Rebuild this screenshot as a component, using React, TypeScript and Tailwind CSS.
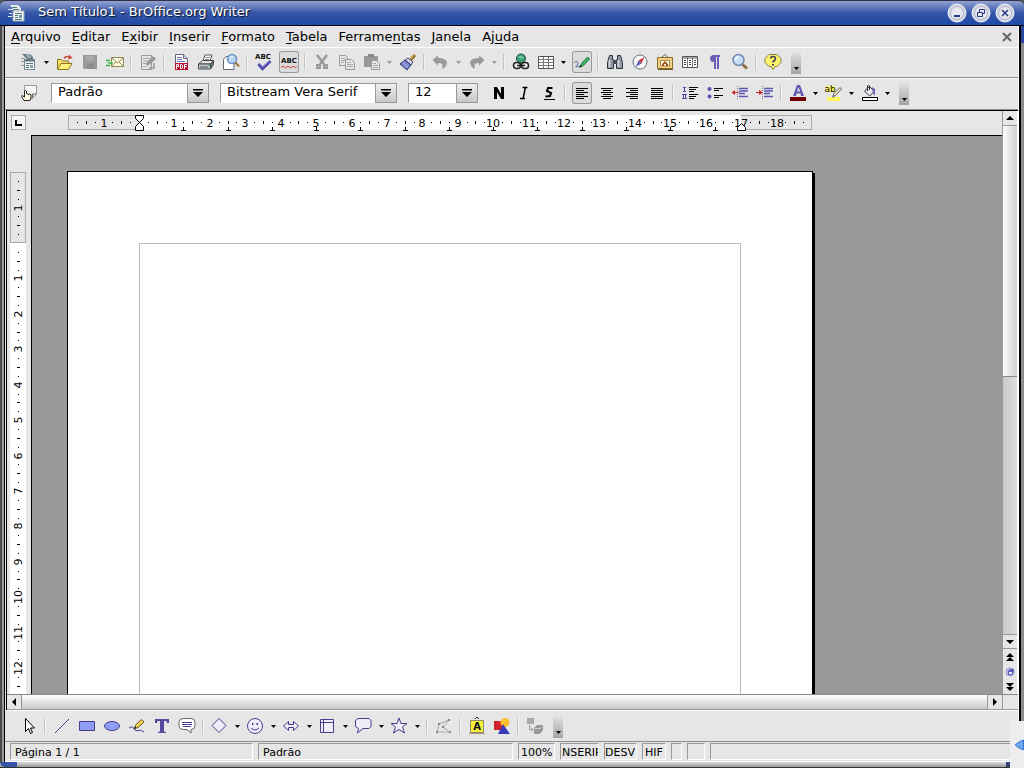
import { ReactNode } from "react";

import clsx from "clsx";

type IconProps = { children: ReactNode };

const Icon = ({ children }: IconProps) => (
  <svg viewBox="0 0 20 20" className="h-5 w-5 shrink-0" fill="none" aria-hidden="true">
    {children}
  </svg>
);

type GlyphProps = { x: number; y: number; size?: string; children: string };

const IconLabel = ({ x, y, size = "text-[7px] font-bold", children }: GlyphProps) => (
  <text x={x} y={y} textAnchor="middle" fill="#111" className={size}>
    {children}
  </text>
);

const VIOLET = "#483d8b";

const icons = {
  newDoc: (
    <Icon>
      <path d="M3 2h8l3 3v2H8L6 5z" fill="#5f7880" />
      <path d="M7 3h4M8 5h4" stroke="#d5e3e8" />
      <path d="M5.500 7.500h10v10h-10z" fill="#f4f8f9" stroke="#75858c" />
      <path d="M6 8h9v1.500H6z" fill="#5f7880" />
      <path d="M7 11.500h7M7 13.500h3M7 15.500h3" stroke="#60737a" />
      <path d="M11 13h3v3h-3z" fill="#7fa5b2" />
      <path d="M2 6.500h4M2 9.500h3M2 13.500h3" stroke="#8b989e" />
    </Icon>
  ),
  open: (
    <Icon>
      <path d="M2.500 17V7.500h4l1 1.500h6v3" fill="#fbe36b" stroke="#8a7420" />
      <path d="M2.500 17.500 6 11.500h11l-3.500 6z" fill="#fff27e" stroke="#8a7420" />
      <path d="M9 6.500q2-3 6-1.500" stroke="#c4533a" strokeWidth="1.500" />
      <path d="M14 2.500 17.500 6l-4 1.500z" fill="#d4442c" />
    </Icon>
  ),
  save: (
    <Icon>
      <path d="M3 3h14v14H4l-1-1z" fill="#999" />
      <path d="M6 4h8v5H6z" fill="#a8a8a8" />
      <path d="M7 12h7v5H7z" fill="#8c8c8c" />
    </Icon>
  ),
  mail: (
    <Icon>
      <path d="M6.500 5.500h12v9h-12z" fill="#fdfce0" stroke="#8d8a58" />
      <path d="m7 6 5.500 5L18 6M7 14l4-4M18 14l-4-4" stroke="#8d8a58" />
      <path d="M1 8.500h4M3 11h5M1 13.500h4" stroke="#3bb44a" strokeWidth="1.500" />
    </Icon>
  ),
  edit: (
    <Icon>
      <path d="M3.500 3.500h10v14h-10z" fill="#e4e4e4" stroke="#999" />
      <path d="M5 6.500h7M5 9h5M5 11.500h4M5 14.500h3" stroke="#aaa" />
      <path d="m8 14 1-4 6-6 3 3-7 6z" fill="#999" />
      <path d="M11 16h5v-5" stroke="#999" strokeWidth="1.500" />
    </Icon>
  ),
  pdf: (
    <Icon>
      <path d="M4.500 2.500h8l4 4v7h-12z" fill="#fff" stroke="#686880" />
      <path d="M12.500 2.500v4h4" fill="#ccd" stroke="#686880" />
      <path d="M6 5.500h5M6 7.500h5M6 9.500h8" stroke="#7272b8" />
      <path d="M4 11h13v7H4z" fill="#b70f2c" />
      <path
        d="M5.500 17v-4.500h2v2h-2M9.500 12.500h1.500l.5.500v3l-.5.500H9.500zM13.500 17v-4.500H16M13.500 14.500h2"
        stroke="#fff"
      />
    </Icon>
  ),
  print: (
    <Icon>
      <path d="m7 9 2-6h7l-2 6" fill="#fff" stroke="#555" />
      <path d="M9.500 5.500h4M9 7.500h4" stroke="#888" />
      <path d="m2.500 12 4-3.500h11l-3 3.500z" fill="#e2e5e6" stroke="#444" />
      <path d="M2.500 12h12v5h-12z" fill="#c4cbcf" stroke="#444" />
      <path d="m14.500 12 3-3.500v4l-3 4.500z" fill="#6d7a82" stroke="#444" />
      <path d="M4 15h8" stroke="#3e474c" />
      <path d="M12 13.500h2" stroke="#48b848" />
    </Icon>
  ),
  preview: (
    <Icon>
      <path d="M2.500 7.500 5 4.500h8v13H2.500z" fill="#fff" stroke="#667" />
      <circle cx="11" cy="7" r="4.500" fill="#b8d8f4" stroke="#6c8fb8" strokeWidth="1.500" />
      <path d="M9 6q1-2 3-1" stroke="#fff" />
      <path d="m14.500 10.500 3.500 4" stroke="#a9713b" strokeWidth="2" />
    </Icon>
  ),
  spell: (
    <Icon>
      <IconLabel x={9} y={7}>
        ABC
      </IconLabel>
      <path d="m4.500 12 4 4.500 8-7.500" stroke="#4c43a8" strokeWidth="3" />
      <path d="m5 11.500 3.500 3.500 7-6" stroke="#8f88e0" />
    </Icon>
  ),
  autoSpell: (
    <Icon>
      <IconLabel x={10} y={11}>
        ABC
      </IconLabel>
      <path d="m2 15.500 2-1.500 2.500 2 2.500-2 2.500 2 2.500-2 2.500 2 1.500-1.500" stroke="#d33b3b" />
    </Icon>
  ),
  cut: (
    <Icon>
      <path d="m5 3 7 9M15 3l-7 9" stroke="#999" strokeWidth="2.500" />
      <path d="M5 13h3v3H5zM12 13h3v3h-3z" stroke="#999" strokeWidth="2" />
    </Icon>
  ),
  copy: (
    <Icon>
      <path d="M2.500 3.500h6l2 2v8h-8z" fill="#e6e6e6" stroke="#999" />
      <path d="M4 6.500h4M4 8.500h4M4 10.500h3" stroke="#aaa" />
      <path d="M8.500 7.500h6l3 3v7h-9z" fill="#e6e6e6" stroke="#999" />
      <path d="M10 10.500h4M10 12.500h6M10 14.500h6" stroke="#aaa" />
    </Icon>
  ),
  paste: (
    <Icon>
      <path d="M2 4h14v11H2z" fill="#999" />
      <path d="M6 2h6v3H6z" fill="#858585" />
      <path d="M9.500 8.500h5l3 3v6h-8z" fill="#e6e6e6" stroke="#999" />
      <path d="M11 11.500h3M11 13.500h5M11 15.500h5" stroke="#aaa" />
    </Icon>
  ),
  brush: (
    <Icon>
      <path d="m12.500 8 4.500-5" stroke="#8c6a1c" strokeWidth="3" />
      <path d="m12.500 7.500 4-5" stroke="#e4bc55" />
      <path d="m10 6 5 4-2 3-6-5z" fill="#d4d8ee" stroke="#446" />
      <path d="m7 8 6 5-4 5-7-6z" fill="#7b86cc" stroke="#2c3468" />
      <path d="m5 11 5 4" stroke="#b8c0ee" />
    </Icon>
  ),
  undo: (
    <Icon>
      <path d="M1.500 8 7 3.500V6q8 0 9 4.500-1 5-5 6.500 1-4 0-5-1-1-4-1v2.500z" fill="#999" />
    </Icon>
  ),
  redo: (
    <Icon>
      <path d="M17.500 8 12 3.500V6q-8 0-9 4.500 1 5 5 6.500-1-4 0-5 1-1 4-1v2.500z" fill="#999" />
    </Icon>
  ),
  link: (
    <Icon>
      <circle cx="10" cy="6.500" r="4.500" fill="#3b9d73" stroke="#1d4c41" />
      <path d="M7 5q2-2 4-1l2 2-3 1z" fill="#72cda0" />
      <rect x="2.500" y="10.500" width="7" height="6" rx="3" fill="#eee" stroke="#222" strokeWidth="1.500" />
      <rect x="10.500" y="10.500" width="7" height="6" rx="3" fill="#eee" stroke="#222" strokeWidth="1.500" />
      <path d="M6 13.500h8" stroke="#222" strokeWidth="1.500" />
    </Icon>
  ),
  table: (
    <Icon>
      <path d="M2.500 4.500h15v12h-15z" fill="#fff" stroke="#555" />
      <path d="M3 7.500h14M3 10.500h14M3 13.500h14M7.500 5v11M12.500 5v11" stroke="#777" />
    </Icon>
  ),
  pen: (
    <Icon>
      <path d="M2 11q2-3 3.500-1t-1 4 3 0" stroke="#5b6fa8" />
      <path d="m8 15 1.500-3.500 6-6.500 2 2-6 6.500z" fill="#42b564" stroke="#1c7440" />
      <path d="m7 16 3-1.500-1.500-1.500z" fill="#222" />
    </Icon>
  ),
  find: (
    <Icon>
      <path d="M4.500 3.500h3v4h1v9h-6v-6zM12.500 3.500h3l2 7v6h-6v-9h1z" fill="#9299a2" stroke="#30353d" />
      <path d="M8 8h4v4H8z" fill="#444b55" />
      <path d="M4.500 8v7M13.500 8v7" stroke="#d7dce2" strokeWidth="1.500" />
    </Icon>
  ),
  compass: (
    <Icon>
      <circle cx="10" cy="10" r="7" fill="#fafafa" stroke="#666c78" />
      <path d="m14.500 5-3 6.500-3-3z" fill="#d23a3a" />
      <path d="m5.500 15 3-6.500 3 3z" fill="#5b62b8" />
    </Icon>
  ),
  gallery: (
    <Icon>
      <path d="m6 6 4-3.500L14 6" stroke="#666" />
      <path d="M2.500 5.500h15v11h-15z" fill="#f2d186" stroke="#8d6e2c" />
      <path d="M5.500 8.500h9V14h-9z" fill="#fdf6d9" stroke="#a98c4b" />
      <path d="m7 12 3-3 3 3v2h-2v-2H9v2H7z" fill="#a35a1f" />
      <path d="M3 17.500h15" stroke="#6e5724" />
    </Icon>
  ),
  dataSource: (
    <Icon>
      <path d="M2.500 4.500h15v11h-15z" fill="#fff" stroke="#555" />
      <path d="M3 6h14" stroke="#aaa" strokeWidth="2" />
      <path d="M7.500 5v10M12.500 5v10" stroke="#777" />
      <path
        d="M4 8.500h2M4 10.500h2M4 12.500h2M9 8.500h2M9 10.500h2M9 12.500h2M14 8.500h2M14 10.500h2M14 12.500h2"
        stroke="#444"
      />
    </Icon>
  ),
  pilcrow: (
    <Icon>
      <path d="M6 3h9v2h-1v12h-2V5h-1v12H9v-7q-4 0-4-3.500T9 3z" fill="#6a5fb4" />
    </Icon>
  ),
  zoom: (
    <Icon>
      <path d="m12.500 12.500 4.500 4" stroke="#8a6b48" strokeWidth="3" />
      <circle cx="8.500" cy="8" r="5.500" fill="#c7def6" stroke="#7388b0" strokeWidth="1.500" />
      <path d="M5.500 8q0-3 3-3" stroke="#fff" strokeWidth="1.500" />
    </Icon>
  ),
  help: (
    <Icon>
      <path d="M6 2.500h8l4 4v4l-4 4h-2l-2 3-2-3H6l-4-4v-4z" fill="#fcf36c" stroke="#87804a" />
      <path d="M7.500 6.500q0-2 2.500-2t2.500 2-2.500 3v1" stroke="#3c3c50" strokeWidth="1.500" />
      <path d="M9 12h2v1.500H9z" fill="#3c3c50" />
    </Icon>
  ),
  styles: (
    <Icon>
      <path d="M5.500 2.500h12v9l-4 4h-8z" fill="#f6f6f6" stroke="#999" />
      <path d="M13.500 15v-4h4" fill="#d5d5d5" stroke="#666" />
      <path
        d="M5.500 8v6L3 12.500l-.5 1L5 17.500h6l1-2.500v-3.500L10.500 11l-1.500.5V11l-1.500-.500V8q-1-1-2 0z"
        fill="#fffbe0"
        stroke="#222"
      />
    </Icon>
  ),
  bold: (
    <Icon>
      <path d="M5 16V4h3l4 7V4h3v12h-3L8 9v7z" fill="#000" />
    </Icon>
  ),
  italic: (
    <Icon>
      <path d="M8.500 4.500h5M6 15.500h5M11.500 4 9 16" stroke="#000" strokeWidth="1.500" />
    </Icon>
  ),
  underline: (
    <Icon>
      <path d="M13.500 5H9L8 8l4 2-1 3-4.500.5" stroke="#000" strokeWidth="2" />
      <path d="M5 16.500h11" stroke="#000" />
    </Icon>
  ),
  alignLeft: (
    <Icon>
      <path d="M4 5.500h12M4 7.500h8M4 9.500h12M4 11.500h8M4 13.500h12M4 15.500h8" stroke="#000" />
    </Icon>
  ),
  alignCenter: (
    <Icon>
      <path d="M4 5.500h12M6 7.500h8M4 9.500h12M6 11.500h8M4 13.500h12M6 15.500h8" stroke="#000" />
    </Icon>
  ),
  alignRight: (
    <Icon>
      <path d="M4 5.500h12M8 7.500h8M4 9.500h12M8 11.500h8M4 13.500h12M8 15.500h8" stroke="#000" />
    </Icon>
  ),
  alignJustify: (
    <Icon>
      <path d="M4 5.500h12M4 7.500h12M4 9.500h12M4 11.500h12M4 13.500h12M4 15.500h12" stroke="#000" />
    </Icon>
  ),
  numbering: (
    <Icon>
      <path
        d="M3 4.500h3M4.500 5v3M3 8.500h3M2 11.500h5M3.500 12v3M5.500 12v3M2 15.500h5"
        stroke="#4d4aa8"
      />
      <path d="M9 4.500h9M9 6.500h7M9 8.500h5M9 11.500h9M9 13.500h7M9 15.500h5" stroke="#000" />
    </Icon>
  ),
  bullets: (
    <Icon>
      <circle cx="4.500" cy="6" r="2" fill="#5a55b4" />
      <circle cx="4.500" cy="13.500" r="2" fill="#5a55b4" />
      <path d="M9 5.500h9M9 7.500h5M9 12.500h9M9 14.500h5" stroke="#000" />
    </Icon>
  ),
  outdent: (
    <Icon>
      <path d="M9 5.500h9M9 8h9M9 10.500h6M9 13.500h9" stroke="#5a55b4" strokeWidth="1.500" />
      <path d="M7.500 3v14" stroke="#777" strokeDasharray="1 1" />
      <path d="M5 7v5L1.500 9.500z" fill="#c92a2a" />
      <path d="M4 9.500h5" stroke="#c92a2a" />
    </Icon>
  ),
  indent: (
    <Icon>
      <path d="M9 5.500h9M9 8h9M9 10.500h6M9 13.500h9" stroke="#5a55b4" strokeWidth="1.500" />
      <path d="M7.500 3v14" stroke="#777" strokeDasharray="1 1" />
      <path d="M4 7v5l4-2.500z" fill="#c92a2a" />
      <path d="M1 9.500h4" stroke="#c92a2a" />
    </Icon>
  ),
  fontColor: (
    <Icon>
      <path d="M5 13 9 2h3l4 11h-3l-.5-2.500h-4L8 13zm4-4.500h3L10.500 4z" fill="#6058b0" />
      <path d="M2 14h16v4H2z" fill="#700000" />
    </Icon>
  ),
  highlight: (
    <Icon>
      <path d="M2 3h9v6H2zM3 14h13v4H3z" fill="#fff75a" />
      <IconLabel x={6} y={9} size="text-[9px]">
        ab
      </IconLabel>
      <path d="m9 13.500 1-3 6-6L17.500 6l-6 6.500z" fill="#fffbc8" stroke="#555" />
      <path d="m7.500 15 2-2 1 1z" fill="#555" />
    </Icon>
  ),
  fill: (
    <Icon>
      <path d="m4.500 8 5-4.500 5 5-5 4.500z" fill="#e6e8f2" stroke="#333" />
      <path d="M7.500 8V3q1-2 2 0v4" stroke="#333" />
      <path d="m12 4 3 2v7l-2-3z" fill="#6a5fb4" />
      <path d="M2.500 14.500h15v3h-15z" fill="#fff" stroke="#000" />
    </Icon>
  ),
  select: (
    <Icon>
      <path d="M6.500 2.500v13l3-3 2 5 2-1-2-4.500h4z" fill="#fff" stroke="#000" />
    </Icon>
  ),
  line: (
    <Icon>
      <path d="M3 17 17 3" stroke={VIOLET} />
    </Icon>
  ),
  rect: (
    <Icon>
      <path d="M2.500 5.500h15v9h-15z" fill="#8f9cf4" stroke={VIOLET} />
    </Icon>
  ),
  ellipse: (
    <Icon>
      <ellipse cx="10" cy="10" rx="7.500" ry="4.500" fill="#8f9cf4" stroke={VIOLET} />
    </Icon>
  ),
  freeform: (
    <Icon>
      <path d="M2 12q3-2 4-.5T8 14t3 .5 3 0 3 1.500" stroke={VIOLET} />
      <path d="m7.500 12.500 1-3.500 6-5.500 2.500 2.500-6 5.500z" fill="#f5d15b" stroke="#6f5420" />
      <path d="m7 13 2.500-1-1.500-1.500z" fill="#111" />
    </Icon>
  ),
  text: (
    <Icon>
      <path d="M3 3h14v4h-2l-.5-2H12v10.500l2 .5v1H6v-1l2-.5V5H5.500L5 7H3z" fill="#564a9e" />
    </Icon>
  ),
  note: (
    <Icon>
      <path
        d="M6 2.500h8q4 0 4 4v3q0 4-4 4V17l-4-3.500H6q-4 0-4-4v-3q0-4 4-4z"
        fill="#fff"
        stroke="#666"
      />
      <path d="M5 6.500h10M5 8.500h10M6 10.500h8" stroke={VIOLET} />
    </Icon>
  ),
  diamond: (
    <Icon>
      <path d="m9 2.500 7 7-7 7-7-7z" fill="#eeeefa" stroke={VIOLET} />
    </Icon>
  ),
  smiley: (
    <Icon>
      <circle cx="9" cy="10" r="7.500" fill="#eeeefa" stroke={VIOLET} />
      <path d="M6 7h1.500v2H6zM10.500 7H12v2h-1.500z" fill={VIOLET} />
      <path d="M5 12q4 4 8 0" stroke={VIOLET} />
    </Icon>
  ),
  blockArrow: (
    <Icon>
      <path d="m1.500 10 5-4.500v3h5v-3l5 4.500-5 4.500v-3h-5v3z" fill="#eeeefa" stroke={VIOLET} />
    </Icon>
  ),
  flowchart: (
    <Icon>
      <path d="M2.500 3.500h13v13h-13zM5.500 4v12M3 6.500h12" fill="#eeeefa" stroke={VIOLET} />
    </Icon>
  ),
  callout: (
    <Icon>
      <path
        d="M4 2.500h11l2 2v6l-2 2H9L3.500 17l1-4.500-3-2v-6z"
        fill="#eeeefa"
        stroke={VIOLET}
      />
    </Icon>
  ),
  star: (
    <Icon>
      <path d="m9 2 2 5.500h6L12.500 11l2 6L9 13.500 3.500 17l2-6L1 7.500h6z" fill="#eeeefa" stroke={VIOLET} />
    </Icon>
  ),
  points: (
    <Icon>
      <path d="m3 16 2-8 10-4-6 7 7 5z" stroke="#aaa" />
      <path d="M2 15h2v2H2zM4 7h2v2H4zM14 3h2v2h-2zM8 10h2v2H8zM15 15h2v2h-2z" fill="#888" />
    </Icon>
  ),
  fontwork: (
    <Icon>
      <path d="m8 3 2-2 2 2" stroke="#333" />
      <path d="M3.500 4.500h13v12h-13z" fill="#f7ee3c" stroke="#8d8a70" />
      <path d="M2 17.500h16" stroke="#99967c" />
      <IconLabel x={10} y={14} size="text-[10px] font-bold">
        A
      </IconLabel>
    </Icon>
  ),
  image: (
    <Icon>
      <path d="M2 5h9v9H2z" fill="#d3232a" />
      <circle cx="13" cy="6.500" r="4.500" fill="#fcc12d" />
      <path d="m11 8 7 10H6z" fill="#3b3db8" />
    </Icon>
  ),
  extrusion: (
    <Icon>
      <path d="M2 2h7v6H2z" fill="#aaa" />
      <path d="M4.500 9v4.500H8M6 11.500l2 2-2 2" stroke="#999" />
      <path d="m9 12 3-3h6v5l-3 4H9z" fill="#999" />
      <path d="M10 12.500h5M15 13l2-2" stroke="#d0d0d0" />
    </Icon>
  ),
};

type ToolButtonProps = {
  icon: keyof typeof icons;
  label: string;
  pressed?: boolean;
  menu?: boolean;
  disabled?: boolean;
};

const ToolButton = ({ icon, label, pressed, menu, disabled }: ToolButtonProps) => (
  <>
    <button
      aria-label={label}
      aria-pressed={pressed}
      disabled={disabled}
      className="flex h-[22px] w-[25px] shrink-0 items-center justify-center"
    >
      <span
        className={clsx(
          "flex h-[22px] w-5 items-center justify-center",
          pressed && "rounded-[3px] bg-[#dcdcdc] ring-1 ring-[#999] ring-inset",
        )}
      >
        {icons[icon]}
      </span>
    </button>
    {menu && (
      <button
        aria-label={`${label}: opções`}
        disabled={disabled}
        className="flex h-[22px] w-[11px] shrink-0 items-center justify-center"
      >
        <svg viewBox="0 0 5 3" className="h-[3px] w-[5px]" aria-hidden="true">
          <path d="M0 0h5L2.500 3z" fill={disabled ? "#999" : "#000"} />
        </svg>
      </button>
    )}
  </>
);

const Separator = () => (
  <div className="mx-[3px] h-4 w-0.5 shrink-0 border-l border-[#c4c4c4] bg-[#f4f4f4]" />
);

const Overflow = () => (
  <button
    aria-label="Mais botões"
    className="ml-1.5 flex h-[22px] w-[10px] shrink-0 translate-y-px items-end justify-center bg-linear-to-b from-[#e2e2e2] to-[#a4a4a4] pb-1"
  >
    <svg viewBox="0 0 5 3" className="h-[3px] w-[5px]" aria-hidden="true">
      <path d="M0 0h5L2.500 3z" fill="#000" />
    </svg>
  </button>
);

type ComboProps = { label: string; value: string; className: string };

const Combo = ({ label, value, className }: ComboProps) => (
  <div className={clsx("relative h-5 shrink-0", className)}>
    <select
      aria-label={label}
      className="block h-5 w-full appearance-none border border-[#999] border-r-white border-b-white bg-white pr-6 pb-0.5 pl-1.5 text-[13px] leading-4"
    >
      <option>{value}</option>
    </select>
    <span className="pointer-events-none absolute inset-y-0 right-0 flex w-[22px] items-center justify-center border border-[#999] bg-linear-to-b from-[#eee] to-[#c8c8c8]">
      <svg viewBox="0 0 10 8" className="h-2 w-2.5" aria-hidden="true">
        <path d="M0 0h10v1.500H0zM0 3h10L5 8z" fill="#000" />
      </svg>
    </span>
  </div>
);

const MENUS = [
  { before: "", key: "A", after: "rquivo" },
  { before: "", key: "E", after: "ditar" },
  { before: "E", key: "x", after: "ibir" },
  { before: "", key: "I", after: "nserir" },
  { before: "", key: "F", after: "ormato" },
  { before: "", key: "T", after: "abela" },
  { before: "Ferrame", key: "n", after: "tas" },
  { before: "", key: "J", after: "anela" },
  { before: "Aj", key: "u", after: "da" },
];

// one centimetre at the current zoom level
const CM = 35.42;
const MARGIN = 71;

const range = (from: number, to: number) =>
  Array.from({ length: to - from + 1 }, (_, i) => from + i);

type MarksProps = { from: number; to: number; vertical?: boolean };

// four subdivisions per centimetre: dot, tick, dot, number
const RulerMarks = ({ from, to, vertical }: MarksProps) => (
  <>
    {range(from, to)
      .filter((q) => q !== 0)
      .map((q) => {
        const pos = Math.round(MARGIN + (q * CM) / 4);
        if (q % 4 === 0) {
          const at = vertical ? `translate(11.500 ${pos}) rotate(-90)` : `translate(${pos} 11.500)`;
          return (
            <text key={q} transform={at} textAnchor="middle" className="text-[11px]">
              {Math.abs(q / 4)}
            </text>
          );
        }
        const size = q % 2 === 0 ? 3 : 1;
        return vertical ? (
          <rect key={q} x={8 - (size - 1) / 2} y={pos} width={size} height="1" />
        ) : (
          <rect key={q} x={pos} y={7 - (size - 1) / 2} width="1" height={size} />
        );
      })}
  </>
);

const HorizontalRuler = () => (
  <svg width="744" height="17" className="shrink-0" role="img" aria-label="Régua horizontal">
    <rect x="0.500" y="0.500" width="743" height="14" fill="#e6e6e6" stroke="#aaa" />
    <rect x="71" y="0" width="602" height="15" fill="#fff" />
    <RulerMarks from={-7} to={75} />
    {range(1, 13).map((n) => {
      const x = Math.round(MARGIN + n * CM * 1.25);
      return <path key={n} d={`M${x - 2} 15.500h5M${x + 0.5} 12v3`} stroke="#000" />;
    })}
    <path d="M67.500.500h8v3l-8 8v4h8v-4l-8-8z" fill="#fff" stroke="#000" />
    <path d="M669.500 15.500v-3l4-4 4 4v3z" fill="#fff" stroke="#000" />
  </svg>
);

const VerticalRuler = () => (
  <svg width="17" height="100%" className="ml-[3px] shrink-0" role="img" aria-label="Régua vertical">
    <g transform="translate(0 37)">
      <rect x="0" y="71" width="16" height="100%" fill="#fff" />
      <rect x="0.500" y="0.500" width="15" height="70" fill="#e6e6e6" stroke="#aaa" />
      <RulerMarks from={-7} to={50} vertical />
    </g>
  </svg>
);

type ScrollButtonProps = { label: string; path: string; className: string };

const ScrollButton = ({ label, path, className }: ScrollButtonProps) => (
  <button
    aria-label={label}
    className={clsx("flex shrink-0 items-center justify-center", className)}
  >
    <svg viewBox="0 0 8 8" className="h-2 w-2" aria-hidden="true">
      <path d={path} fill="#000" />
    </svg>
  </button>
);

const TitleBar = () => (
  <header className="flex h-[26px] shrink-0 items-center rounded-t-md border-t border-b border-t-[#30304c] border-b-black bg-linear-to-b from-[#94a2d2] via-[#3555a6] via-50% to-[#1d49a8] pr-[9px] pl-2">
    <svg viewBox="0 0 18 18" className="h-[18px] w-[18px]" fill="none" aria-hidden="true">
      <path d="M2 1h8l3 3v3H6z" fill="#e4eeee" />
      <path d="M5 7h11v10H5z" fill="#f3f6f6" stroke="#9bb0b8" />
      <path d="M4 3.500h5M5 5.500h6M7 9.500h7M7 11.500h3M7 13.500h3M7 15.500h7" stroke="#54717c" />
      <path d="M11 11h3v3h-3z" fill="#6d95a5" />
      <path d="M0 5.500h5M1 9.500h3M0 12.500h4" stroke="#dce8e8" />
    </svg>
    <h1 className="ml-3 flex-1 pb-0.5 text-[13px] leading-5 text-white [text-shadow:1px_1px_1px_#112]">
      Sem Título1 - BrOffice.org Writer
    </h1>
    <div className="flex gap-1">
      <WindowButton label="Minimizar">
        <path d="M7 12h6v2H7z" fill="#243c86" />
      </WindowButton>
      <WindowButton label="Restaurar">
        <path d="M8.500 9V6.500h5v4H12M6.500 9.500h5v4h-5z" stroke="#243c86" />
      </WindowButton>
      <WindowButton label="Fechar">
        <path d="m7 7 6 6M13 7l-6 6" stroke="#243c86" strokeWidth="1.500" />
      </WindowButton>
    </div>
  </header>
);

const WindowButton = ({ label, children }: { label: string; children: ReactNode }) => (
  <button aria-label={label} className="h-5 w-5">
    <svg viewBox="0 0 20 20" className="h-5 w-5" fill="none" aria-hidden="true">
      <circle cx="10" cy="10" r="9" fill="#ced3e2" stroke="#f4f5fa" />
      <circle cx="10" cy="10" r="6.500" fill="#e6e6ec" stroke="#b4b9cc" />
      {children}
    </svg>
  </button>
);

const MenuBar = () => (
  <nav className="flex h-[22px] shrink-0 items-center border-b border-white pr-1.5">
    {MENUS.map((menu) => (
      <button
        key={menu.before + menu.key}
        className="pr-[5px] pl-1.5 text-[13px] leading-5 whitespace-nowrap"
      >
        {menu.before}
        <span className="underline underline-offset-2">{menu.key}</span>
        {menu.after}
      </button>
    ))}
    <button aria-label="Fechar documento" className="ml-auto">
      <svg viewBox="0 0 10 10" className="h-2.5 w-2.5" aria-hidden="true">
        <path d="m1 1 8 8M9 1 1 9" stroke="#666" strokeWidth="2" />
      </svg>
    </button>
  </nav>
);

const StandardToolbar = () => (
  <div className="flex h-[30px] shrink-0 items-center border-b border-[#8c8c8c] pb-px pl-[11px]">
    <ToolButton icon="newDoc" label="Novo" menu />
    <ToolButton icon="open" label="Abrir" />
    <ToolButton icon="save" label="Salvar" disabled />
    <ToolButton icon="mail" label="Documento como e-mail" />
    <Separator />
    <ToolButton icon="edit" label="Editar arquivo" disabled />
    <Separator />
    <ToolButton icon="pdf" label="Exportar como PDF" />
    <ToolButton icon="print" label="Imprimir" />
    <ToolButton icon="preview" label="Visualizar página" />
    <Separator />
    <ToolButton icon="spell" label="Verificação ortográfica" />
    <ToolButton icon="autoSpell" label="Autoverificação" pressed />
    <Separator />
    <ToolButton icon="cut" label="Cortar" disabled />
    <ToolButton icon="copy" label="Copiar" disabled />
    <ToolButton icon="paste" label="Colar" menu disabled />
    <ToolButton icon="brush" label="Pincel de estilo" />
    <Separator />
    <ToolButton icon="undo" label="Desfazer" menu disabled />
    <ToolButton icon="redo" label="Refazer" menu disabled />
    <Separator />
    <ToolButton icon="link" label="Hyperlink" />
    <ToolButton icon="table" label="Tabela" menu />
    <ToolButton icon="pen" label="Mostrar funções de desenho" pressed />
    <Separator />
    <ToolButton icon="find" label="Localizar e substituir" />
    <ToolButton icon="compass" label="Navegador" />
    <ToolButton icon="gallery" label="Galeria" />
    <ToolButton icon="dataSource" label="Fontes de dados" />
    <ToolButton icon="pilcrow" label="Caracteres não-imprimíveis" />
    <ToolButton icon="zoom" label="Zoom" />
    <Separator />
    <ToolButton icon="help" label="Ajuda" />
    <Overflow />
  </div>
);

const FormatToolbar = () => (
  <div className="flex h-8 shrink-0 items-center border-t border-b border-t-white border-b-[#8c8c8c] pb-0.5 pl-[11px]">
    <ToolButton icon="styles" label="Estilos e formatação" />
    <Combo label="Estilo" value="Padrão" className="ml-[10px] w-[158px]" />
    <Combo label="Nome da fonte" value="Bitstream Vera Serif" className="ml-[11px] w-[177px]" />
    <Combo label="Tamanho da fonte" value="12" className="ml-[11px] w-[70px]" />
    <div className="w-2" />
    <ToolButton icon="bold" label="Negrito" />
    <ToolButton icon="italic" label="Itálico" />
    <ToolButton icon="underline" label="Sublinhado" />
    <Separator />
    <ToolButton icon="alignLeft" label="Alinhar à esquerda" pressed />
    <ToolButton icon="alignCenter" label="Centralizado" />
    <ToolButton icon="alignRight" label="Alinhar à direita" />
    <ToolButton icon="alignJustify" label="Justificado" />
    <Separator />
    <ToolButton icon="numbering" label="Numeração" />
    <ToolButton icon="bullets" label="Marcadores" />
    <ToolButton icon="outdent" label="Diminuir recuo" />
    <ToolButton icon="indent" label="Aumentar recuo" />
    <Separator />
    <ToolButton icon="fontColor" label="Cor da fonte" menu />
    <ToolButton icon="highlight" label="Realçar" menu />
    <ToolButton icon="fill" label="Cor do plano de fundo" menu />
    <Overflow />
  </div>
);

const DrawingToolbar = () => (
  <div className="flex h-8 shrink-0 items-center border-t border-b border-t-white border-b-[#8c8c8c] pl-[11px]">
    <ToolButton icon="select" label="Selecionar" />
    <Separator />
    <ToolButton icon="line" label="Linha" />
    <ToolButton icon="rect" label="Retângulo" />
    <ToolButton icon="ellipse" label="Elipse" />
    <ToolButton icon="freeform" label="Linha à mão livre" />
    <ToolButton icon="text" label="Texto" />
    <ToolButton icon="note" label="Texto explicativo" />
    <Separator />
    <ToolButton icon="diamond" label="Formas básicas" menu />
    <ToolButton icon="smiley" label="Formas de símbolos" menu />
    <ToolButton icon="blockArrow" label="Setas cheias" menu />
    <ToolButton icon="flowchart" label="Fluxogramas" menu />
    <ToolButton icon="callout" label="Textos explicativos" menu />
    <ToolButton icon="star" label="Estrelas" menu />
    <Separator />
    <ToolButton icon="points" label="Pontos" disabled />
    <Separator />
    <ToolButton icon="fontwork" label="Galeria do Fontwork" />
    <ToolButton icon="image" label="De um arquivo" />
    <Separator />
    <ToolButton icon="extrusion" label="Ativar/Desativar extrusão" disabled />
    <Overflow />
  </div>
);

const VerticalScrollbar = () => (
  <div className="flex w-4 shrink-0 flex-col border-x border-l-[#999] border-r-white bg-[#e6e6e6]">
    <ScrollButton
      label="Rolar para cima"
      path="M0 6h8L4 2z"
      className="h-[15px] border-b border-[#999]"
    />
    <div className="flex min-h-0 flex-1 flex-col bg-linear-to-r from-[#c8c8c8] to-[#dedede]">
      <div className="h-[49.5%] border-b border-[#888] bg-linear-to-r from-white via-[#e6e6e6] to-[#d0d0d0]" />
    </div>
    <ScrollButton
      label="Rolar para baixo"
      path="M0 2h8L4 6z"
      className="h-[15px] border-y border-[#999]"
    />
    <ScrollButton label="Página anterior" path="M0 4h8L4 0zM0 8h8L4 4z" className="h-[15px]" />
    <button aria-label="Navegação" className="flex h-[15px] shrink-0 items-center justify-center">
      <svg viewBox="0 0 10 10" className="h-2.5 w-2.5" aria-hidden="true">
        <circle cx="5" cy="5" r="4" fill="#b9bbf0" stroke="#9a9cdc" />
        <path d="M3 8V4l2-2h4v3L7 8z" fill="#5d60b8" />
        <path d="M4 5h3v2H4z" fill="#eef" />
      </svg>
    </button>
    <ScrollButton label="Próxima página" path="M0 0h8L4 4zM0 4h8L4 8z" className="h-[15px]" />
  </div>
);

const HorizontalScrollbar = () => (
  <div className="flex h-4 shrink-0 border-y border-t-[#888] border-b-[#999]">
    <ScrollButton
      label="Rolar para a esquerda"
      path="M6 0v8L2 4z"
      className="w-[15px] border-r border-[#999]"
    />
    <div className="flex-1 bg-linear-to-b from-white via-[#e2e2e2] to-[#cacaca]" />
    <ScrollButton
      label="Rolar para a direita"
      path="M2 0v8l4-4z"
      className="w-[15px] border-l border-[#999]"
    />
    <div className="w-4 border-l border-[#999] bg-[#e6e6e6]" />
  </div>
);

const WorkArea = () => (
  <main className="ml-px flex min-h-0 flex-1 flex-col border-t border-l border-black">
    <div className="flex min-h-0 flex-1">
      <div className="flex min-w-0 flex-1 flex-col">
        <div className="flex h-6 shrink-0 items-start pt-1 pl-1">
          <button
            aria-label="Tabulação"
            className="h-[15px] w-[15px] shrink-0 border border-[#aaa] bg-[#f4f4f4]"
          >
            <svg viewBox="0 0 13 13" className="h-[13px] w-[13px]" aria-hidden="true">
              <path d="M3 4h2v4h5v2H3z" fill="#000" />
            </svg>
          </button>
          <div className="w-[42px] shrink-0" />
          <HorizontalRuler />
        </div>
        <div className="flex min-h-0 flex-1">
          <div className="flex w-6 shrink-0 overflow-hidden">
            <VerticalRuler />
          </div>
          <div className="flex min-w-0 flex-1 overflow-hidden border-t border-l border-black bg-[#999] pt-[35px] pl-[35px]">
            <div
              role="textbox"
              aria-label="Documento"
              aria-multiline="true"
              className="flex w-[746px] shrink-0 border-t border-x border-black bg-white pt-[71px] shadow-[2px_2px_0_#000]"
            >
              <div className="mx-[71px] flex-1 border-x border-t border-[#bbb]" />
            </div>
          </div>
        </div>
      </div>
      <VerticalScrollbar />
    </div>
    <HorizontalScrollbar />
  </main>
);

type StatusCellProps = { children?: ReactNode; className: string };

const StatusCell = ({ children, className }: StatusCellProps) => (
  <div
    className={clsx(
      "h-[17px] overflow-hidden border border-[#999] border-r-white border-b-white pt-px text-[11px] leading-4 whitespace-nowrap",
      className,
    )}
  >
    {children}
  </div>
);

const StatusBar = () => (
  <footer className="flex h-5 shrink-0 items-center gap-[5px] border-b border-white px-[5px]">
    <StatusCell className="w-[243px] pl-1">Página 1 / 1</StatusCell>
    <StatusCell className="w-[255px] pl-1">Padrão</StatusCell>
    <StatusCell className="w-[37px] pl-0.5">100%</StatusCell>
    <StatusCell className="w-[39px] pl-px">NSERIR</StatusCell>
    <StatusCell className="w-[33px]">DESV</StatusCell>
    <StatusCell className="w-6 pl-0.5">HIF</StatusCell>
    <StatusCell className="w-[11px]" />
    <StatusCell className="w-[18px]" />
    <StatusCell className="flex-1" />
  </footer>
);

export default function App() {
  return (
    <div className="relative flex h-screen flex-col overflow-hidden bg-[#55555c] font-['DejaVu_Sans',sans-serif] text-black">
      <TitleBar />
      <div className="flex min-h-0 flex-1">
        <div className="w-[5px] shrink-0 border-r border-l-2 border-r-black border-l-[#4a4a52] bg-[#999]" />
        <div className="flex min-w-0 flex-1 flex-col bg-[#e6e6e6]">
          <MenuBar />
          <StandardToolbar />
          <FormatToolbar />
          <WorkArea />
          <DrawingToolbar />
          <StatusBar />
        </div>
        <div className="flex w-[6px] shrink-0 border-l border-white bg-[#8c8c8c]">
          <div className="w-0.5 bg-black" />
          <div className="h-[17px] flex-1 bg-linear-to-b from-[#2c4a9c] to-[#2348a4]" />
        </div>
      </div>
      <div className="flex h-[6px] shrink-0 justify-between border-b border-[#333] bg-linear-to-b from-[#ddd] to-[#999] pr-3.5">
        <div className="w-[17px] rounded-bl-md bg-[#3454a4]" />
        <div className="w-1 bg-[#34407c]" />
      </div>
      <button
        aria-label="Mostrar painel"
        className="absolute right-0 bottom-0 flex h-[47px] w-3.5 items-center justify-end bg-[#ededed]"
      >
        <svg viewBox="0 0 10 12" className="h-3 w-2.5" aria-hidden="true">
          <path d="M9.500 1v10L5 9 1.500 6.500v-1L5 3z" fill="#6fa8ee" stroke="#3a76d0" />
        </svg>
      </button>
    </div>
  );
}
